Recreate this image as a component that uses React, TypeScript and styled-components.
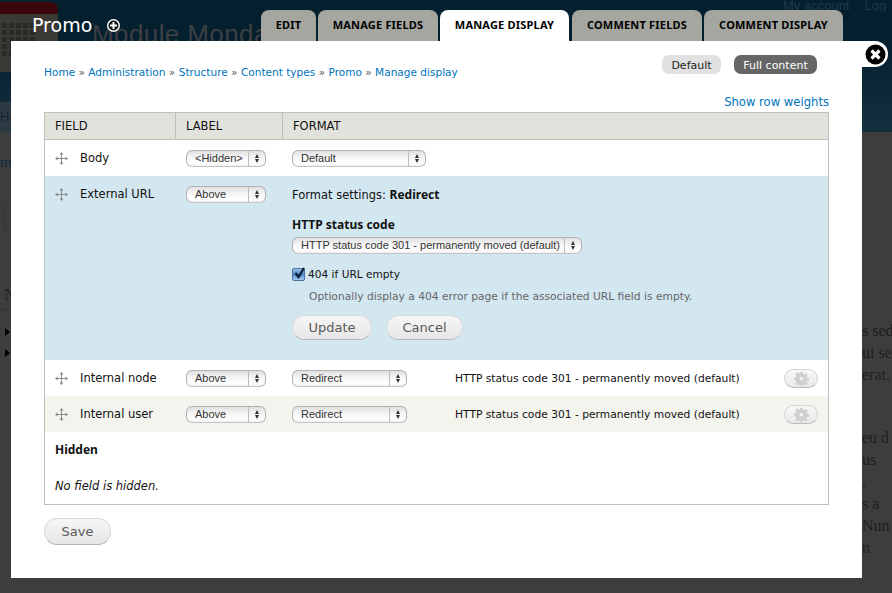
import React from "react";
import styled, { createGlobalStyle } from "styled-components";

const GlobalStyle = createGlobalStyle`
  html, body {
    margin: 0;
    height: 100%;
    background: #3d3d3d;
    overflow: hidden;
  }
  #root {
    height: 100%;
  }
`;

const uiFont = `"DejaVu Sans", "Liberation Sans", sans-serif`;
const boldFont = `700 12px "Noto Sans", "DejaVu Sans", sans-serif`;

/* page behind the overlay */
const Backdrop = styled.div`
  position: relative;
  width: 892px;
  height: 593px;
  overflow: hidden;
  background: #3d3d3d;
  font-family: ${uiFont};
`;

const Masthead = styled.header`
  height: 132px;
  display: flex;
  background: linear-gradient(#04202f 0, #04202f 40px, #142f3e 132px);
`;

const LogoMark = styled.svg`
  width: 58px;
  height: 72px;
  flex-shrink: 0;
`;

const SiteName = styled.div`
  flex: 1;
  min-width: 0;
  padding: 19px 0 0 34px;
  font: 26px "Liberation Sans", sans-serif;
  letter-spacing: 0.4px;
  color: #3c3f41;
  white-space: nowrap;
`;

const AccountLinks = styled.div`
  display: flex;
  gap: 15px;
  width: 109px;
  height: 14px;
  margin-top: -2px;
  font: 13px "Liberation Sans", sans-serif;
  color: #1f3947;
  white-space: nowrap;
  overflow: hidden;
  flex-shrink: 0;
`;

const BackBody = styled.div`
  display: flex;
  justify-content: space-between;
  height: 461px;
`;

const BackLeft = styled.div`
  width: 11px;
  overflow: hidden;
  font: 14px "Liberation Serif", serif;
  color: #1c2c36;
  margin-top: -30px;
`;

const BackCrumb = styled.div`
  height: 30px;
  line-height: 30px;
  background: #2c3a43;
  color: #15232c;
  font-family: "Liberation Sans", sans-serif;
  font-size: 13px;
`;

const BackLink = styled.div`
  margin-top: 22px;
  color: #0d2c3f;
  font-size: 15px;
`;

const BackBox = styled.div`
  margin-top: 36px;
  height: 22px;
  width: 16px;
  margin-left: 4px;
  border: 1px solid #333;
`;

const BackHeading = styled.div`
  margin-top: 54px;
  padding-left: 4px;
  padding-bottom: 4px;
  font-size: 17px;
  color: #222;
  border-bottom: 1px solid #333;
`;

const BackBullet = styled.div<{ $top: number }>`
  width: 0;
  height: 0;
  margin: ${(p) => p.$top}px 0 0 5px;
  border-left: 5px solid #000;
  border-top: 4px solid transparent;
  border-bottom: 4px solid transparent;
`;

const BackRight = styled.div`
  width: 30px;
  overflow: hidden;
  padding-top: 188px;
  font: 16px/22px "Liberation Serif", serif;
  color: #1f1f1f;
  white-space: nowrap;
`;

const BackGap = styled.div`
  height: 41px;
`;

/* overlay */
const OverlayHead = styled.div`
  position: absolute;
  left: 0;
  top: 0;
  width: 892px;
  height: 41px;
  display: flex;
  align-items: flex-end;
`;

const OverlayTitle = styled.h1`
  display: flex;
  align-items: center;
  align-self: flex-start;
  width: 229px;
  margin: 14px 0 0 32px;
  font: 400 19px "DejaVu Sans", sans-serif;
  color: #fff;
`;

const AddIcon = styled.svg`
  width: 13px;
  height: 13px;
  margin-left: 15px;
`;

const Tabs = styled.nav`
  display: flex;
  gap: 2px;
`;

const Tab = styled.a<{ $active?: boolean; $width: number }>`
  width: ${(p) => p.$width}px;
  height: 31px;
  display: flex;
  align-items: center;
  justify-content: center;
  padding-bottom: 2px;
  box-sizing: border-box;
  border-radius: 8px 8px 0 0;
  background: ${(p) => (p.$active ? "#fff" : "#a6a6a0")};
  font: 700 11px "Noto Sans", sans-serif;
  letter-spacing: 0.2px;
  color: #000;
  text-transform: uppercase;
  white-space: nowrap;
  &:nth-child(4) {
    margin-left: 1px;
  }
`;

const Modal = styled.main`
  position: absolute;
  left: 11px;
  top: 41px;
  width: 851px;
  height: 537px;
  box-sizing: border-box;
  padding: 14px 33px 0;
  background: #fff;
  font-size: 12px;
  color: #111;
`;

const CloseTab = styled.a`
  position: absolute;
  left: 851px;
  top: 0;
  width: 26px;
  height: 26px;
  display: flex;
  align-items: center;
  padding-left: 3px;
  box-sizing: border-box;
  background: #fff;
  border-radius: 0 13px 13px 0;
`;

const TopRow = styled.div`
  display: flex;
  height: 39px;
  justify-content: space-between;
`;

const Breadcrumb = styled.div`
  padding-top: 11px;
  font-size: 10.55px;
  color: #555;
`;

const Link = styled.a`
  color: #0074bd;
  text-decoration: none;
`;

const Pills = styled.div`
  display: flex;
  gap: 13px;
  margin-right: 12px;
`;

const Pill = styled.a<{ $active?: boolean; $width: number }>`
  width: ${(p) => p.$width}px;
  height: 19px;
  display: flex;
  align-items: center;
  justify-content: center;
  padding-top: 1px;
  box-sizing: border-box;
  border-radius: 7px;
  font-size: 11px;
  background: ${(p) => (p.$active ? "#666" : "#e1e1e1")};
  color: ${(p) => (p.$active ? "#fff" : "#222")};
`;

const WeightsRow = styled.div`
  display: flex;
  justify-content: flex-end;
  height: 18px;
  padding-top: 1px;
  box-sizing: border-box;
  font-size: 11.6px;
  line-height: 14px;
`;

const FieldTable = styled.table`
  width: 785px;
  height: 393px;
  border: 1px solid #bebfb9;
  border-collapse: separate;
  border-spacing: 0;
  table-layout: fixed;
  font-size: 11.5px;
`;

const HeadCell = styled.th<{ $width?: number }>`
  ${(p) => (p.$width ? `width: ${p.$width}px;` : "")}
  height: 27px;
  padding: 0 0 1px 10px;
  box-sizing: border-box;
  background: #e1e2dc;
  border-bottom: 1px solid #bebfb9;
  border-right: 1px solid #bebfb9;
  text-align: left;
  font-weight: 400;
  font-size: 11.5px;
  color: #111;
  &:last-child {
    border-right: 0;
  }
`;

const Row = styled.tr<{ $tone?: "white" | "blue" | "grey" }>`
  background: ${(p) =>
    p.$tone === "blue" ? "#d3e7f1" : p.$tone === "grey" ? "#f3f4ee" : "#fff"};
`;

const Cell = styled.td`
  height: 36px;
  padding: 0 10px;
  box-sizing: border-box;
  vertical-align: top;
`;

const FormatCell = styled(Cell)`
  padding-left: 9px;
`;

const CellLine = styled.div`
  display: flex;
  align-items: center;
  height: 36px;
  padding-top: 1px;
  box-sizing: border-box;
`;

const FieldName = styled.span`
  margin: -1px 0 0 12px;
  white-space: nowrap;
`;

const Handle = styled.svg`
  width: 13px;
  height: 13px;
  flex-shrink: 0;
`;

const SelectBox = styled.div<{ $width: number }>`
  width: ${(p) => p.$width}px;
  height: 17px;
  display: flex;
  align-items: stretch;
  box-sizing: border-box;
  border: 1px solid #b1b1b1;
  border-bottom-color: #c4c4c4;
  border-radius: 6px;
  background: linear-gradient(#e0e0e0 0, #f6f6f6 45%, #ffffff 80%, #f0f0f0 100%);
  font: 11px "Liberation Sans", sans-serif;
  color: #333;
  flex-shrink: 0;
`;

const SelectValue = styled.span`
  flex: 1;
  padding-left: 8px;
  line-height: 15px;
  white-space: nowrap;
  overflow: hidden;
`;

const SelectArrows = styled.span`
  width: 16px;
  display: flex;
  flex-direction: column;
  gap: 1px;
  align-items: center;
  justify-content: center;
  border-left: 1px solid #bdbdbd;
  &::before,
  &::after {
    content: "";
    width: 0;
    height: 0;
    border-left: 2.5px solid transparent;
    border-right: 2.5px solid transparent;
  }
  &::before {
    border-bottom: 4px solid #333;
  }
  &::after {
    border-top: 4px solid #333;
  }
`;

const Summary = styled.span`
  margin-left: 48px;
  font-size: 10.7px;
  white-space: nowrap;
`;

const GearButton = styled.button`
  margin-left: auto;
  margin-right: 0;
  width: 34px;
  height: 19px;
  display: flex;
  align-items: center;
  justify-content: center;
  padding: 0;
  border: 1px solid #d6d6d6;
  border-bottom-color: #bbb;
  border-radius: 10px;
  background: linear-gradient(#f8f8f8, #e9e9e9);
`;

const SettingsForm = styled.div`
  height: 184px;
  padding-top: 10px;
  box-sizing: border-box;
`;

const SettingsTitle = styled.div`
  height: 26px;
  font-size: 11.5px;
  strong {
    font: ${boldFont};
  }
`;

const StatusLabel = styled.div`
  margin-top: 4px;
  height: 21px;
  font: ${boldFont};
`;

const Checkline = styled.label`
  display: flex;
  align-items: center;
  gap: 3px;
  margin-top: 12px;
  height: 16px;
  font-size: 10.6px;
`;

const CheckMark = styled.span`
  width: 11px;
  height: 11px;
  display: flex;
  position: relative;
  border: 1px solid #4d6f9c;
  border-radius: 2px;
  background: linear-gradient(#9cc0e8, #4f86c8 50%, #a8cdf0);
`;

const CheckTick = styled.svg`
  position: absolute;
  left: 0;
  top: -3px;
  width: 14px;
  height: 14px;
`;

const Hint = styled.div`
  margin: 8px 0 0 17px;
  height: 15px;
  font-size: 10.7px;
  color: #666;
`;

const ButtonRow = styled.div`
  display: flex;
  gap: 14px;
  margin-top: 10px;
`;

const PillButton = styled.button<{ $width: number; $height?: number }>`
  width: ${(p) => p.$width}px;
  height: ${(p) => p.$height ?? 25}px;
  padding: 0;
  border: 1px solid #d8d8d8;
  border-bottom-color: #b4b4b4;
  border-radius: 13px;
  background: linear-gradient(#f6f6f6, #e6e6e6);
  font: 13px ${uiFont};
  color: #5a5a5a;
`;

const HiddenHeading = styled.div`
  display: flex;
  align-items: center;
  height: 36px;
  padding-bottom: 1px;
  box-sizing: border-box;
  font: ${boldFont};
`;

const EmptyNote = styled.div`
  display: flex;
  align-items: center;
  height: 36px;
  font-style: italic;
`;

const SaveArea = styled.div`
  margin-top: 13px;
`;

const DragHandle = () => (
  <Handle viewBox="0 0 13 13">
    <path d="M6.500 1v11M1 6.500h11" stroke="#8a8a8a" strokeWidth="1" fill="none" />
    <path
      d="M6.500 0L8.500 2.500H4.500zM6.500 13L4.500 10.500H8.500zM0 6.500L2.500 4.500V8.500zM13 6.500L10.500 8.500V4.500z"
      fill="#8a8a8a"
    />
  </Handle>
);

const Select = ({ value, width }: { value: string; width: number }) => (
  <SelectBox $width={width}>
    <SelectValue>{value}</SelectValue>
    <SelectArrows />
  </SelectBox>
);

const Gear = () => (
  <svg width="15" height="15" viewBox="0 0 24 24">
    <path
      fill="#cfcfcf"
      fillRule="evenodd"
      d="M10 1h4l.6 3.200 1.900.8 2.700-1.900 2.800 2.800-1.900 2.700.8 1.900 3.100.5v4l-3.100.6-.8 1.900 1.900 2.700-2.800 2.800-2.700-1.900-1.900.8-.6 3.100h-4l-.6-3.100-1.900-.8-2.700 1.900-2.800-2.800 1.900-2.700-.8-1.900L0 14v-4l3.100-.5.8-1.900L2 4.900l2.800-2.800 2.700 1.900 1.900-.8zM12 9a3 3 0 1 0 0 6 3 3 0 0 0 0-6z"
    />
  </svg>
);

const Logo = () => (
  <LogoMark viewBox="0 0 58 72">
    <path d="M0 2h50a8 8 0 0 1 8 8v56a6 6 0 0 1-6 6H0z" fill="#3b3934" />
    <path d="M0 2h50a8 8 0 0 1 8 8v4H0z" fill="#3a0609" />
    {[23, 30, 37, 44, 51].map((y) =>
      [2, 9, 16, 23, 30].map((x) => (
        <rect key={`${x}-${y}`} x={x} y={y} width="5" height="5" fill="#2a2926" />
      ))
    )}
  </LogoMark>
);

const crumbs = ["Home", "Administration", "Structure", "Content types", "Promo", "Manage display"];
const tabs: [string, number, boolean?][] = [
  ["Edit", 55],
  ["Manage fields", 120],
  ["Manage display", 129, true],
  ["Comment fields", 130],
  ["Comment display", 139],
];
const summary = "HTTP status code 301 - permanently moved (default)";

export default function App() {
  return (
    <>
      <GlobalStyle />
      <Backdrop>
        <Masthead>
          <Logo />
          <SiteName>Module Monday</SiteName>
          <AccountLinks>
            <span>My account</span>
            <span>Log</span>
          </AccountLinks>
        </Masthead>
        <BackBody>
          <BackLeft>
            <BackCrumb>Ho</BackCrumb>
            <BackLink>m</BackLink>
            <BackBox />
            <BackHeading>N</BackHeading>
            <BackBullet $top={18} />
            <BackBullet $top={13} />
          </BackLeft>
          <BackRight>
            <div>s sed</div>
            <div>ui se</div>
            <div>erat.</div>
            <BackGap />
            <div>eu d</div>
            <div>us</div>
            <div>.</div>
            <div>s a</div>
            <div>Nun</div>
            <div>n</div>
          </BackRight>
        </BackBody>

        <OverlayHead>
          <OverlayTitle>
            Promo
            <AddIcon viewBox="0 0 13 13">
              <circle cx="6.500" cy="6.500" r="6.500" fill="#fff" />
              <circle cx="6.500" cy="6.500" r="5" fill="#111" />
              <path d="M6.500 3v7M3 6.500h7" stroke="#fff" strokeWidth="2" />
            </AddIcon>
          </OverlayTitle>
          <Tabs>
            {tabs.map(([label, width, active]) => (
              <Tab key={label} $width={width} $active={active}>
                {label}
              </Tab>
            ))}
          </Tabs>
        </OverlayHead>

        <Modal>
          <CloseTab>
            <svg width="21" height="21" viewBox="0 0 21 21">
              <circle cx="10.500" cy="10.500" r="10" fill="#000" />
              <path d="M6.500 6.500l8 8M14.500 6.500l-8 8" stroke="#fff" strokeWidth="3.200" />
            </svg>
          </CloseTab>
          <TopRow>
            <Breadcrumb>
              {crumbs.map((crumb, i) => (
                <React.Fragment key={crumb}>
                  {i > 0 && " » "}
                  <Link>{crumb}</Link>
                </React.Fragment>
              ))}
            </Breadcrumb>
            <Pills>
              <Pill $width={59}>Default</Pill>
              <Pill $width={83} $active>
                Full content
              </Pill>
            </Pills>
          </TopRow>
          <WeightsRow>
            <Link>Show row weights</Link>
          </WeightsRow>
          <FieldTable>
            <thead>
              <tr>
                <HeadCell $width={131}>FIELD</HeadCell>
                <HeadCell $width={107}>LABEL</HeadCell>
                <HeadCell>FORMAT</HeadCell>
              </tr>
            </thead>
            <tbody>
              <Row>
                <Cell>
                  <CellLine>
                    <DragHandle />
                    <FieldName>Body</FieldName>
                  </CellLine>
                </Cell>
                <Cell>
                  <CellLine>
                    <Select value="<Hidden>" width={80} />
                  </CellLine>
                </Cell>
                <FormatCell>
                  <CellLine>
                    <Select value="Default" width={134} />
                  </CellLine>
                </FormatCell>
              </Row>
              <Row $tone="blue">
                <Cell>
                  <CellLine>
                    <DragHandle />
                    <FieldName>External URL</FieldName>
                  </CellLine>
                </Cell>
                <Cell>
                  <CellLine>
                    <Select value="Above" width={80} />
                  </CellLine>
                </Cell>
                <FormatCell>
                  <SettingsForm>
                    <SettingsTitle>
                      Format settings: <strong>Redirect</strong>
                    </SettingsTitle>
                    <StatusLabel>HTTP status code</StatusLabel>
                    <Select value={summary} width={290} />
                    <Checkline>
                      <CheckMark>
                        <CheckTick viewBox="0 0 14 14">
                          <path d="M2.500 7l3 4L11 2" stroke="#0a1a3a" strokeWidth="2.200" fill="none" />
                        </CheckTick>
                      </CheckMark>
                      404 if URL empty
                    </Checkline>
                    <Hint>Optionally display a 404 error page if the associated URL field is empty.</Hint>
                    <ButtonRow>
                      <PillButton $width={80}>Update</PillButton>
                      <PillButton $width={77}>Cancel</PillButton>
                    </ButtonRow>
                  </SettingsForm>
                </FormatCell>
              </Row>
              <Row>
                <Cell>
                  <CellLine>
                    <DragHandle />
                    <FieldName>Internal node</FieldName>
                  </CellLine>
                </Cell>
                <Cell>
                  <CellLine>
                    <Select value="Above" width={80} />
                  </CellLine>
                </Cell>
                <FormatCell>
                  <CellLine>
                    <Select value="Redirect" width={115} />
                    <Summary>{summary}</Summary>
                    <GearButton>
                      <Gear />
                    </GearButton>
                  </CellLine>
                </FormatCell>
              </Row>
              <Row $tone="grey">
                <Cell>
                  <CellLine>
                    <DragHandle />
                    <FieldName>Internal user</FieldName>
                  </CellLine>
                </Cell>
                <Cell>
                  <CellLine>
                    <Select value="Above" width={80} />
                  </CellLine>
                </Cell>
                <FormatCell>
                  <CellLine>
                    <Select value="Redirect" width={115} />
                    <Summary>{summary}</Summary>
                    <GearButton>
                      <Gear />
                    </GearButton>
                  </CellLine>
                </FormatCell>
              </Row>
              <Row>
                <Cell colSpan={3}>
                  <HiddenHeading>Hidden</HiddenHeading>
                  <EmptyNote>No field is hidden.</EmptyNote>
                </Cell>
              </Row>
            </tbody>
          </FieldTable>
          <SaveArea>
            <PillButton $width={67} $height={27}>
              Save
            </PillButton>
          </SaveArea>
        </Modal>
      </Backdrop>
    </>
  );
}
